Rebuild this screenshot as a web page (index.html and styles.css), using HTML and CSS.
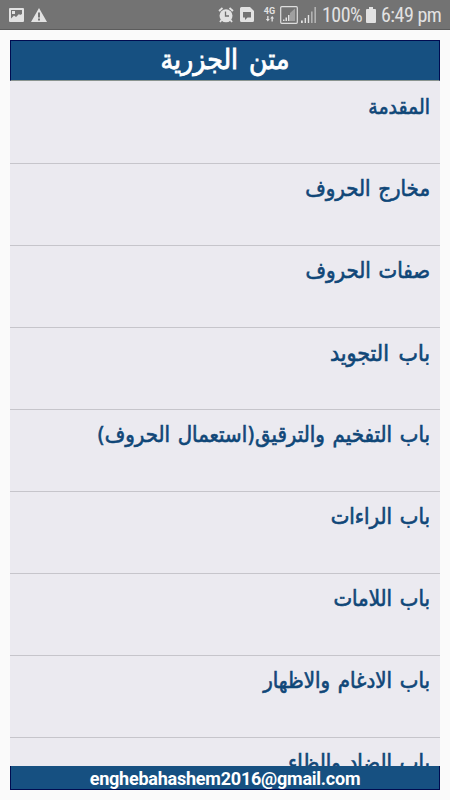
FILE: index.html
```
<!DOCTYPE html>
<html lang="ar">
<head>
    <meta charset="UTF-8">
    <meta name="viewport" content="width=device-width, initial-scale=1.0">
    <title>متن الجزرية</title>
    <link rel="stylesheet" href="styles.css">
</head>
<body>
    <div class="status-bar">
        <div class="status-left">
            <svg width="15" height="14" viewBox="0 0 15 14"><path fill="#e2e2e2" fill-rule="evenodd" d="M1 0h13q1 0 1 1v12q0 1-1 1H1q-1 0-1-1V1q0-1 1-1zM2 2v8.500l3-3 2 1.500 3-3 1 1 2-1V2zM3 3h3v3H3z"/></svg>
            <svg width="16" height="14" viewBox="0 0 16 14"><path fill="#e2e2e2" fill-rule="evenodd" d="M8 0l8 14H0zM7 4.500v5h2v-5zM7 10.500v2h2v-2z"/></svg>
        </div>
        <div class="status-right">
            <svg class="alarm" width="16" height="16" viewBox="0 0 16 16"><circle cx="8" cy="8.800" r="6.500" fill="#e2e2e2"/><path d="M1 4l3.500-3M15 4l-3.500-3M3.500 13l-1.500 2M12.500 13l1.500 2" stroke="#e2e2e2" stroke-width="1.800"/><path d="M7.500 4.500v4.500h3.500" stroke="#707070" stroke-width="1.300" fill="none"/></svg>
            <svg class="note" width="14" height="15" viewBox="0 0 14 15"><path fill="#e2e2e2" fill-rule="evenodd" d="M1.500 0H10l4 4v9.500q0 1.500-1.500 1.500h-11Q0 15 0 13.500v-12Q0 0 1.500 0zM3 5v5.500h2V13l2.500-2.500H11V5z"/></svg>
            <div class="network">
                <span>4G</span>
                <svg width="10" height="6" viewBox="0 0 10 6"><path fill="#e2e2e2" d="M2.200 0h1.300v3h1.300L2.800 5.600.9 3h1.300zM6.500 5.600h1.300v-3h1.300L7.200 0 5.200 2.600h1.300z"/></svg>
            </div>
            <svg class="sim" width="18" height="18" viewBox="0 0 18 18"><rect x=".7" y=".7" width="16.600" height="16.600" rx="1" fill="none" stroke="#dedede" stroke-width="1.200"/><path fill="#a0a0a0" d="M10 7l5-4.500V15h-5z"/><path fill="#e2e2e2" d="M3 13.500h1.500V15H3zM5.500 11.500H7V15H5.500zM8 9h1.500v6H8z"/></svg>
            <svg class="signal" width="16" height="16" viewBox="0 0 16 16"><path fill="#e2e2e2" d="M0 13.500h1.800V16H0zM3.600 11h1.400v5H3.600zM6.800 8h1.400v8H6.800z"/><path fill="#c2c2c2" d="M10.200 4.500h1.300V16h-1.300zM13.500 0h1.300v16h-1.300z"/></svg>
            <span class="percent">100%</span>
            <svg class="battery" width="10" height="16" viewBox="0 0 10 16"><path fill="#e2e2e2" d="M3 0h4v2h2q1 0 1 1v12q0 1-1 1H1q-1 0-1-1V3q0-1 1-1h2z"/></svg>
            <span class="clock">6:49 pm</span>
        </div>
    </div>

    <div class="app" dir="rtl">
        <h1 class="title">متن الجزرية</h1>
        <ul class="chapters">
            <li class="single">المقدمة</li>
            <li>مخارج الحروف</li>
            <li>صفات الحروف</li>
            <li class="wide">باب التجويد</li>
            <li>باب التفخيم والترقيق(استعمال الحروف)</li>
            <li>باب الراءات</li>
            <li>باب اللامات</li>
            <li>باب الادغام والاظهار</li>
            <li>باب الضاد والظاء</li>
        </ul>
        <div class="footer" dir="ltr">enghebahashem2016@gmail.com</div>
    </div>
</body>
</html>
```
FILE: styles.css
```
* {
    box-sizing: border-box;
}
body {
    margin: 0;
    height: 800px;
    overflow: hidden;
    background-color: #fafafa;
    font-family: Roboto, sans-serif;
}
.status-bar {
    display: flex;
    justify-content: space-between;
    height: 30px;
    padding: 0 10px 0 9px;
    background-color: #737373;
    border-bottom: 1px solid #5c5c5c;
    color: #e2e2e2;
}
.status-left,
.status-right {
    display: flex;
    align-items: center;
}
.status-left {
    gap: 7px;
}
.status-right svg {
    flex: none;
}
.note {
    margin-left: 6px;
}
.network {
    display: flex;
    flex-direction: column;
    align-items: center;
    width: 13px;
    margin-left: 9px;
    font-size: 9px;
    line-height: 9px;
    font-weight: bold;
}
.sim {
    margin-left: 4px;
}
.signal {
    margin-left: 3px;
}
.percent,
.clock {
    font-family: "Roboto Condensed", Roboto, sans-serif;
    font-size: 20px;
    font-stretch: condensed;
    letter-spacing: -0.5px;
    line-height: 32px;
    white-space: nowrap;
}
.percent {
    width: 39px;
    margin-left: 5px;
}
.battery {
    margin-left: 5px;
}
.clock {
    width: 59px;
    margin-left: 5px;
}
.app {
    display: flex;
    flex-direction: column;
    height: 750px;
    margin: 10px 10px 0;
    background-color: #ebeaf0;
}
.title {
    flex: none;
    height: 41px;
    margin: 0;
    border: 1px solid #000b50;
    border-bottom: 1px solid #8a9490;
    background-color: #165081;
    color: #fff;
    font-family: "DejaVu Sans Condensed", "DejaVu Sans", sans-serif;
    font-size: 28px;
    font-weight: normal;
    line-height: 37px;
    text-align: center;
    word-spacing: 3px;
    -webkit-text-stroke: 0.8px #fff;
}
.chapters {
    flex: 1;
    min-height: 0;
    margin: 0;
    padding: 1px 0 0;
    overflow: hidden;
    list-style: none;
}
.chapters li {
    height: 82px;
    padding: 10px 10px 0;
    border-bottom: 1px solid #c6c5cb;
    color: #104778;
    font-family: "DejaVu Sans Condensed", "DejaVu Sans", sans-serif;
    font-size: 22px;
    line-height: 30px;
    white-space: nowrap;
    word-spacing: 1.5px;
    -webkit-text-stroke: 0.6px #104778;
}
.chapters .single {
    font-size: 21px;
}
.chapters .wide {
    font-size: 23px;
    word-spacing: 3px;
}
.footer {
    flex: none;
    height: 24px;
    border: 1px solid #000b50;
    border-top: 0;
    background-color: #165081;
    color: #fff;
    font-size: 18px;
    font-weight: bold;
    letter-spacing: -0.23px;
    line-height: 25px;
    text-align: center;
}
```
